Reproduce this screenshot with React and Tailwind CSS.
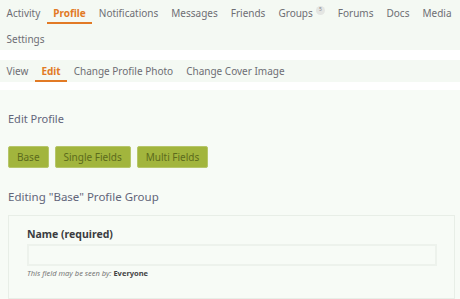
import React from 'react';

const mainNav = [
  { label: 'Activity' },
  { label: 'Profile', active: true },
  { label: 'Notifications' },
  { label: 'Messages' },
  { label: 'Friends' },
  { label: 'Groups', count: 5 },
  { label: 'Forums' },
  { label: 'Docs' },
  { label: 'Media' },
  { label: 'Settings' },
];

const subNav = [
  { label: 'View' },
  { label: 'Edit', active: true },
  { label: 'Change Profile Photo' },
  { label: 'Change Cover Image' },
];

const groups = ['Base', 'Single Fields', 'Multi Fields'];

export default function App() {
  return (
    <div className="w-[460px] h-[299px] overflow-hidden bg-[#f7fbf6] text-[#6e6e74]" style={{ fontFamily: '"Noto Sans", sans-serif' }}>
      {/* main tabs */}
      <nav className="flex flex-wrap bg-[#f4f9f3] h-[50px] content-start">
        {mainNav.map(item => (
          <a
            key={item.label}
            className={`relative flex items-center h-[26px] px-[6.5px] text-[10px] ${
              item.active ? 'text-[#e27a25] font-bold' : ''
            }`}
          >
            {item.label}
            {item.count && (
              <span className="ml-[3px] -mt-[6px] flex items-center justify-center w-[9px] h-[9px] rounded-full bg-[#e4e6e3] text-[5px] text-[#8a8a8a]">
                {item.count}
              </span>
            )}
            {item.active && <span className="absolute left-0 right-0 bottom-[2px] h-[2px] bg-[#e27a25]" />}
          </a>
        ))}
      </nav>

      <div className="h-[10px] bg-white" />

      {/* sub tabs */}
      <nav className="flex bg-[#f4f9f3] h-[22px] items-stretch">
        {subNav.map(item => (
          <a
            key={item.label}
            className={`relative flex items-center px-[6.5px] text-[10px] ${
              item.active ? 'text-[#e27a25] font-bold' : ''
            }`}
          >
            {item.label}
            {item.active && <span className="absolute left-0 right-0 bottom-0 h-[2px] bg-[#e27a25]" />}
          </a>
        ))}
      </nav>

      <div className="h-[8px] bg-white" />

      <div className="px-[8px]">
        <h2 className="mt-[22px] text-[11px] leading-[14px] text-[#62657a]">Edit Profile</h2>

        <div className="flex gap-[6px] mt-[20px]">
          {groups.map(g => (
            <button
              key={g}
              className="h-[22px] px-[8px] rounded-[2px] bg-[#a2b53d] border border-[#b6c66a] text-[10px] text-[#5c6b1c]"
            >
              {g}
            </button>
          ))}
        </div>

        <h3 className="mt-[22px] text-[11.5px] text-[#62657a] leading-[14px]">Editing "Base" Profile Group</h3>

        <div className="mt-[11px] w-[447px] h-[84px] border border-[#e8eee7] bg-[#f7fbf6] px-[18px] pt-[11px]">
          <label className="block text-[10.5px] font-bold text-[#3b3b40] leading-[14px]">Name (required)</label>
          <div className="mt-[3px] w-[410px] h-[22px] border-2 border-[#edf2ec] bg-[#f7fbf6]" />
          <p className="mt-[1px] text-[7.5px] leading-[12px] italic text-[#777]">
            This field may be seen by: <span className="not-italic font-bold text-[#444]">Everyone</span>
          </p>
        </div>
      </div>
    </div>
  );
}
